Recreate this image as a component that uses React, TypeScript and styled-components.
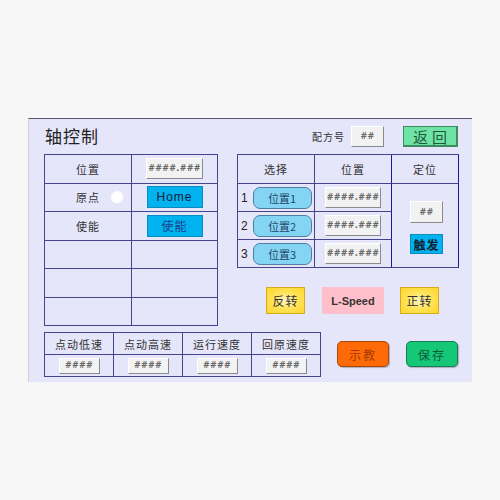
import React from "react";
import styled, { createGlobalStyle } from "styled-components";

const Global = createGlobalStyle`
  html, body { margin: 0; padding: 0; background: #f7f7f7; }
  body { font-family: "Noto Sans CJK SC", "Liberation Sans", sans-serif; color: #222; }
`;

const LINE = "#45458e";

const Page = styled.div`
  width: 500px;
  height: 500px;
  padding: 118px 0 0 28px;
  box-sizing: border-box;
`;

const Panel = styled.div`
  width: 444px;
  height: 264px;
  box-sizing: border-box;
  background: #e6e6fa;
  border-top: 1px solid #55556a;
  border-left: 1px solid #cfcfe0;
  padding: 0 14px 0 15px;
`;

const Header = styled.div`
  display: flex;
  align-items: center;
  height: 35px;
`;

const Title = styled.div`
  font-size: 17px;
  margin: -3px 0 0 1px;
  letter-spacing: 1px;
`;

const Label = styled.span<{ $size?: number }>`
  font-size: ${(p) => p.$size ?? 11}px;
  letter-spacing: 1px;
  color: #333;
`;

const Spacer = styled.div`
  flex: 1;
`;

const ValueBox = styled.div<{ $w: number; $h: number }>`
  width: ${(p) => p.$w}px;
  height: ${(p) => p.$h}px;
  box-sizing: border-box;
  background: #f2f2f2;
  border: 1px solid #fff;
  border-right-color: #8a8a8a;
  border-bottom-color: #8a8a8a;
  display: flex;
  align-items: center;
  justify-content: center;
  font-family: "DejaVu Sans", sans-serif;
  font-size: 8px;
  font-weight: bold;
  color: #666;
  letter-spacing: 0.3px;
`;

const ReturnButton = styled.div`
  width: 55px;
  height: 21px;
  box-sizing: border-box;
  margin-left: 19px;
  background: #6fe3a6;
  border: 1px solid #3f8a5f;
  border-right-width: 2px;
  border-bottom-width: 2px;
  display: flex;
  align-items: center;
  justify-content: center;
  font-size: 15px;
  letter-spacing: 4px;
  padding-left: 4px;
  color: #1c5a36;
`;

const Main = styled.div`
  display: flex;
  gap: 19px;
`;

const Grid = styled.div<{ $cols: string; $rows: string }>`
  display: grid;
  grid-template-columns: ${(p) => p.$cols};
  grid-template-rows: ${(p) => p.$rows};
  border-top: 1px solid ${LINE};
  border-left: 1px solid ${LINE};
`;

const Cell = styled.div<{ $merge?: boolean; $dark?: boolean; $pad?: boolean }>`
  position: relative;
  grid-row: ${(p) => (p.$merge ? "2 / 5" : "auto")};
  grid-column: ${(p) => (p.$merge ? "3" : "auto")};
  border-right: 1px solid ${(p) => (p.$dark ? "#1a1aa0" : LINE)};
  border-bottom: 1px solid ${LINE};
  display: flex;
  align-items: center;
  justify-content: ${(p) => (p.$pad ? "flex-start" : "center")};
  padding-left: ${(p) => (p.$pad ? 3 : 0)}px;
  gap: 5px;
`;

const Stack = styled.div`
  display: flex;
  flex-direction: column;
  align-items: center;
  gap: 11px;
  margin: 4px 0 0 3px;
`;

const Lamp = styled.div`
  position: absolute;
  right: 7px;
  top: 7px;
  width: 13px;
  height: 13px;
  border-radius: 50%;
  background: radial-gradient(circle at 45% 45%, #ffffff 55%, #dcdce6 80%, #f4f4f8 100%);
`;

const FlatButton = styled.div<{ $color?: string }>`
  width: 56px;
  height: 22px;
  box-sizing: border-box;
  background: #00b2ee;
  border: 1px solid #0a8cc0;
  display: flex;
  align-items: center;
  justify-content: center;
  font-family: "Liberation Sans", "Noto Sans CJK SC", sans-serif;
  font-size: 12px;
  letter-spacing: 1px;
  color: ${(p) => p.$color ?? "#1a1a3a"};
`;

const TriggerButton = styled(FlatButton)`
  width: 33px;
  height: 20px;
  font-size: 12px;
  font-weight: bold;
  color: #123;
`;

const RowNum = styled.span`
  font-family: "Liberation Sans", sans-serif;
  font-size: 12px;
  color: #222;
`;

const PosButton = styled.div`
  width: 59px;
  height: 22px;
  box-sizing: border-box;
  background: #84d4f4;
  border: 1px solid #4f7f9c;
  border-radius: 7px;
  display: flex;
  align-items: center;
  justify-content: center;
  font-size: 11px;
  color: #23466a;
`;

const RightCol = styled.div`
  display: flex;
  flex-direction: column;
`;

const DirRow = styled.div`
  display: flex;
  margin: 19px 0 0 29px;
`;

const DirButton = styled.div<{ $gap?: number }>`
  width: 39px;
  height: 27px;
  box-sizing: border-box;
  margin-left: ${(p) => p.$gap ?? 0}px;
  background: radial-gradient(ellipse at 50% 50%, #fff6c8 0%, #ffe45a 45%, #ffd52a 100%);
  border: 1px solid #d8ac18;
  display: flex;
  align-items: center;
  justify-content: center;
  font-size: 12px;
  color: #333;
  letter-spacing: 1px;
`;

const SpeedTag = styled.div`
  width: 62px;
  height: 27px;
  margin-left: 17px;
  background: #ffc0cb;
  display: flex;
  align-items: center;
  justify-content: center;
  font-family: "Liberation Sans", sans-serif;
  font-size: 11px;
  font-weight: bold;
  color: #333;
`;

const Bottom = styled.div`
  display: flex;
  align-items: flex-start;
`;

const SpeedGrid = styled(Grid)`
  margin-top: 6px;
`;

const ActionButton = styled.div<{ $bg: string; $line: string; $ink: string; $gap: number }>`
  width: 53px;
  height: 26px;
  box-sizing: border-box;
  margin: 15px 0 0 ${(p) => p.$gap}px;
  background: ${(p) => p.$bg};
  border: 1px solid ${(p) => p.$line};
  border-radius: 5px;
  box-shadow: 1px 1px 1px rgba(0, 0, 0, 0.25);
  display: flex;
  align-items: center;
  justify-content: center;
  font-size: 12px;
  letter-spacing: 2px;
  color: ${(p) => p.$ink};
`;

const positions = ["位置1", "位置2", "位置3"];
const speeds = ["点动低速", "点动高速", "运行速度", "回原速度"];

export default function App() {
  return (
    <>
      <Global />
      <Page>
        <Panel>
          <Header>
            <Title>轴控制</Title>
            <Spacer />
            <Label $size={10}>配方号</Label>
            <ValueBox $w={33} $h={21} style={{ marginLeft: 6 }}>##</ValueBox>
            <ReturnButton>返回</ReturnButton>
          </Header>

          <Main>
            <Grid $cols="87px 86px" $rows="repeat(6, 28.5px)">
              <Cell><Label>位置</Label></Cell>
              <Cell><ValueBox $w={57} $h={21}>####.###</ValueBox></Cell>
              <Cell>
                <Label>原点</Label>
                <Lamp />
              </Cell>
              <Cell><FlatButton>Home</FlatButton></Cell>
              <Cell><Label>使能</Label></Cell>
              <Cell><FlatButton $color="#1e3c8c">使能</FlatButton></Cell>
              <Cell />
              <Cell />
              <Cell />
              <Cell />
              <Cell />
              <Cell />
            </Grid>

            <RightCol>
              <Grid $cols="77px 77px 67px" $rows="29px 28px 28px 28px">
                <Cell><Label>选择</Label></Cell>
                <Cell $dark><Label>位置</Label></Cell>
                <Cell $dark><Label>定位</Label></Cell>
                <Cell $dark $merge>
                  <Stack>
                    <ValueBox $w={33} $h={22}>##</ValueBox>
                    <TriggerButton>触发</TriggerButton>
                  </Stack>
                </Cell>
                {positions.map((p, i) => (
                  <React.Fragment key={p}>
                    <Cell $pad>
                      <RowNum>{i + 1}</RowNum>
                      <PosButton>{p}</PosButton>
                    </Cell>
                    <Cell $dark><ValueBox $w={56} $h={21}>####.###</ValueBox></Cell>
                  </React.Fragment>
                ))}
              </Grid>
              <DirRow>
                <DirButton>反转</DirButton>
                <SpeedTag>L-Speed</SpeedTag>
                <DirButton $gap={16}>正转</DirButton>
              </DirRow>
            </RightCol>
          </Main>

          <Bottom>
            <SpeedGrid $cols="repeat(4, 69px)" $rows="22px 22px">
              {speeds.map((s) => (
                <Cell key={s}><Label>{s}</Label></Cell>
              ))}
              {speeds.map((s) => (
                <Cell key={s + "v"}><ValueBox $w={41} $h={16}>####</ValueBox></Cell>
              ))}
            </SpeedGrid>
            <ActionButton $bg="#ff6a08" $line="#a8480a" $ink="#a83a00" $gap={16}>示教</ActionButton>
            <ActionButton $bg="#14c878" $line="#1a7a52" $ink="#0d5a3a" $gap={17}>保存</ActionButton>
          </Bottom>
        </Panel>
      </Page>
    </>
  );
}
